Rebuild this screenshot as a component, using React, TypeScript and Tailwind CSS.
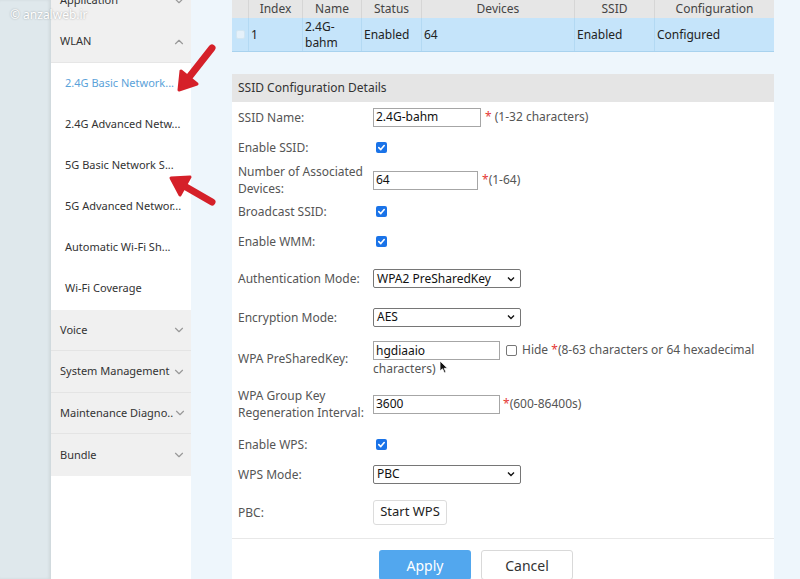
import { ChevronDown, ChevronUp } from 'lucide-react';

const subItems = [
  { label: '2.4G Basic Network...', active: true },
  { label: '2.4G Advanced Netw...' },
  { label: '5G Basic Network S...' },
  { label: '5G Advanced Networ...' },
  { label: 'Automatic Wi-Fi Sh...' },
  { label: 'Wi-Fi Coverage' },
];

const lowerMenus = [
  { label: 'Voice', h: 'h-[41px]' },
  { label: 'System Management', h: 'h-[42px]' },
  { label: 'Maintenance Diagno..', h: 'h-[41px]' },
  { label: 'Bundle', h: 'h-[42px]' },
];

function Check() {
  return (
    <span className="flex h-[11px] w-[11px] items-center justify-center rounded-[2px] bg-[#1a73e8]">
      <svg width="9" height="9" viewBox="0 0 10 10">
        <path d="M2 5.2 L4.2 7.3 L8 2.8" fill="none" stroke="white" strokeWidth="1.8" strokeLinecap="round" strokeLinejoin="round" />
      </svg>
    </span>
  );
}

function Select({ value }: { value: string }) {
  return (
    <div className="flex h-[19px] w-[148px] items-center justify-between rounded-[2px] border border-[#767676] bg-white pl-[3px] pr-[5px] text-[12px] text-[#111]">
      <span>{value}</span>
      <svg width="8" height="6" viewBox="0 0 8 6">
        <path d="M1 1.5 L4 4.5 L7 1.5" fill="none" stroke="#111" strokeWidth="1.4" />
      </svg>
    </div>
  );
}

function TextBox({ value, w }: { value: string; w: string }) {
  return (
    <div className={`flex h-[19px] items-center border border-[#a6a6a6] bg-white pl-[2px] text-[12px] text-[#111] ${w}`}>
      {value}
    </div>
  );
}

function Row({ label, h, children }: { label: React.ReactNode; h: string; children?: React.ReactNode }) {
  return (
    <div className={`flex items-center ${h}`}>
      <div className="w-[141px] pl-[6px] pr-2 leading-[17px] text-[#555]">{label}</div>
      <div className="flex flex-1 items-center">{children}</div>
    </div>
  );
}

export default function App() {
  return (
    <div className="relative flex h-[579px] w-[800px] overflow-hidden bg-[#eef6fc] font-['Segoe_UI','Noto_Sans',sans-serif] text-[12px]">
      <div className="w-[51px] shrink-0 bg-[#dfe8ec] shadow-[inset_-2px_0_3px_rgba(0,0,0,0.07)]" />

      <aside className="-mt-[20px] w-[140px] shrink-0 bg-white text-[11px] text-[#333]">
        <div className="flex h-[41px] items-center justify-between bg-[#f0f0f0] pl-[9px] pr-[5px]">
          <span>Application</span>
          <ChevronDown className="h-[14px] w-[14px] text-[#999]" />
        </div>
        <div className="flex h-[42px] items-center justify-between border-b border-[#e6e6e6] bg-[#f0f0f0] pl-[9px] pr-[5px]">
          <span>WLAN</span>
          <ChevronUp className="h-[14px] w-[14px] text-[#999]" />
        </div>
        {subItems.map((item) => (
          <div
            key={item.label}
            className={`flex h-[41px] items-center overflow-hidden whitespace-nowrap pl-[14px] ${item.active ? 'text-[#5ba2d9]' : 'text-[#333]'}`}
          >
            {item.label}
          </div>
        ))}
        <div className="h-[1px]" />
        {lowerMenus.map((m, i) => (
          <div
            key={m.label}
            className={`flex items-center justify-between bg-[#f0f0f0] pl-[9px] pr-[5px] ${m.h} ${i < 3 ? 'border-b border-[#e4e4e4]' : ''}`}
          >
            <span className="whitespace-nowrap">{m.label}</span>
            <ChevronDown className="h-[14px] w-[14px] shrink-0 text-[#999]" />
          </div>
        ))}
      </aside>

      <main className="flex-1 pl-[41px] text-[13px]">
        <div className="w-[542px]">
          <div className="grid h-[18px] grid-cols-[17px_54px_59px_60px_153px_80px_119px] bg-[#e6e6e6] text-center text-[12px] leading-[18px] text-[#444]">
            <div className="border-r border-[#d6d6d6]" />
            <div className="border-r border-[#d6d6d6]">Index</div>
            <div className="border-r border-[#d6d6d6]">Name</div>
            <div className="border-r border-[#d6d6d6]">Status</div>
            <div className="border-r border-[#d6d6d6]">Devices</div>
            <div className="border-r border-[#d6d6d6]">SSID</div>
            <div>Configuration</div>
          </div>
          <div className="grid h-[34px] grid-cols-[17px_54px_59px_60px_153px_80px_119px] border-b border-[#a8d2ee] bg-[#c5e4fa] text-[12px] text-[#222]">
            <div className="flex items-center justify-center border-r border-[#b3d9f3]">
              <span className="h-[9px] w-[9px] rounded-[2px] border border-[#d3e6f2] bg-[#e5f1fa]" />
            </div>
            <div className="flex items-center border-r border-[#b3d9f3] pl-[2px]">1</div>
            <div className="flex items-center border-r border-[#b3d9f3] pl-[2px] leading-[16px]">2.4G-<br />bahm</div>
            <div className="flex items-center border-r border-[#b3d9f3] pl-[2px]">Enabled</div>
            <div className="flex items-center border-r border-[#b3d9f3] pl-[2px]">64</div>
            <div className="flex items-center border-r border-[#b3d9f3] pl-[2px]">Enabled</div>
            <div className="flex items-center pl-[2px]">Configured</div>
          </div>

          <div className="mt-[22px] flex h-[28px] items-center bg-[#e5e5e5] pl-[6px] text-[12px] text-[#333]">
            SSID Configuration Details
          </div>

          <div className="h-[500px] bg-white text-[12px]">
            <Row label="SSID Name:" h="h-[30px]">
              <TextBox value="2.4G-bahm" w="w-[108px]" />
              <span className="ml-[4px] text-[#555]"><span className="text-[#e53935]">*</span> (1-32 characters)</span>
            </Row>
            <Row label="Enable SSID:" h="h-[30px]">
              <span className="ml-[3px]"><Check /></span>
            </Row>
            <Row label={<>Number of Associated<br />Devices:</>} h="h-[36px]">
              <TextBox value="64" w="w-[105px]" />
              <span className="ml-[4px] text-[#555]"><span className="text-[#e53935]">*</span>(1-64)</span>
            </Row>
            <Row label="Broadcast SSID:" h="h-[27px]">
              <span className="ml-[3px]"><Check /></span>
            </Row>
            <Row label="Enable WMM:" h="h-[32px]">
              <span className="ml-[3px]"><Check /></span>
            </Row>
            <Row label="Authentication Mode:" h="h-[43px]">
              <Select value="WPA2 PreSharedKey" />
            </Row>
            <Row label="Encryption Mode:" h="h-[34px]">
              <Select value="AES" />
            </Row>
            <div className="flex h-[48px]">
              <div className="flex w-[141px] items-center pl-[6px] pt-[1px] text-[#555]">WPA PreSharedKey:</div>
              <div className="flex-1 pt-[7px] leading-[17px] text-[#555]">
                <div className="flex items-start">
                  <TextBox value="hgdiaaio" w="w-[127px]" />
                  <span className="ml-[6px] mt-[4px] h-[11px] w-[11px] shrink-0 rounded-[2px] border border-[#777] bg-white" />
                  <span className="ml-[5px] whitespace-nowrap">Hide <span className="text-[#e53935]">*</span>(8-63 characters or 64 hexadecimal</span>
                </div>
                <div>characters)</div>
              </div>
            </div>
            <Row label={<>WPA Group Key<br />Regeneration Interval:</>} h="h-[44px]">
              <TextBox value="3600" w="w-[127px]" />
              <span className="ml-[3px] text-[#555]"><span className="text-[#e53935]">*</span>(600-86400s)</span>
            </Row>
            <Row label="Enable WPS:" h="h-[36px]">
              <span className="ml-[3px]"><Check /></span>
            </Row>
            <Row label="WPS Mode:" h="h-[24px]">
              <Select value="PBC" />
            </Row>
            <Row label="PBC:" h="h-[52px]">
              <button className="h-[25px] w-[74px] rounded-[3px] border border-[#dcdcdc] bg-white text-[13px] text-[#222]">
                Start WPS
              </button>
            </Row>
            <div className="h-[1px] bg-[#e8e8e8]" />
            <div className="flex gap-[10px] pl-[147px] pt-[11px]">
              <button className="h-[30px] w-[92px] rounded-[3px] bg-[#52a7ee] text-[14px] text-white">Apply</button>
              <button className="h-[30px] w-[92px] rounded-[3px] border border-[#d9d9d9] bg-white text-[14px] text-[#333]">Cancel</button>
            </div>
          </div>
        </div>
      </main>

      <div className="absolute left-[10px] top-[6px] text-[12px] text-white [text-shadow:0_0_2px_rgba(0,0,0,0.35)]">
        © anzalweb.ir
      </div>

      <svg className="pointer-events-none absolute left-0 top-0" width="800" height="579">
        <g fill="#d52029" stroke="#d52029" strokeLinecap="round" strokeLinejoin="round">
          <line x1="212" y1="48" x2="190" y2="76" strokeWidth="7" />
          <polygon points="179,90 197,84 181,71" strokeWidth="3" />
          <line x1="212" y1="202" x2="186" y2="187" strokeWidth="7" />
          <polygon points="171,178 190,177 180,195" strokeWidth="3" />
        </g>
      </svg>

      <svg className="pointer-events-none absolute left-[439px] top-[360px]" width="10" height="14" viewBox="0 0 10 14">
        <path d="M1 1 L1 11 L3.5 8.8 L5.5 13 L7 12.3 L5.2 8.3 L8.5 8.3 Z" fill="#111" stroke="white" strokeWidth="0.8" />
      </svg>
    </div>
  );
}
